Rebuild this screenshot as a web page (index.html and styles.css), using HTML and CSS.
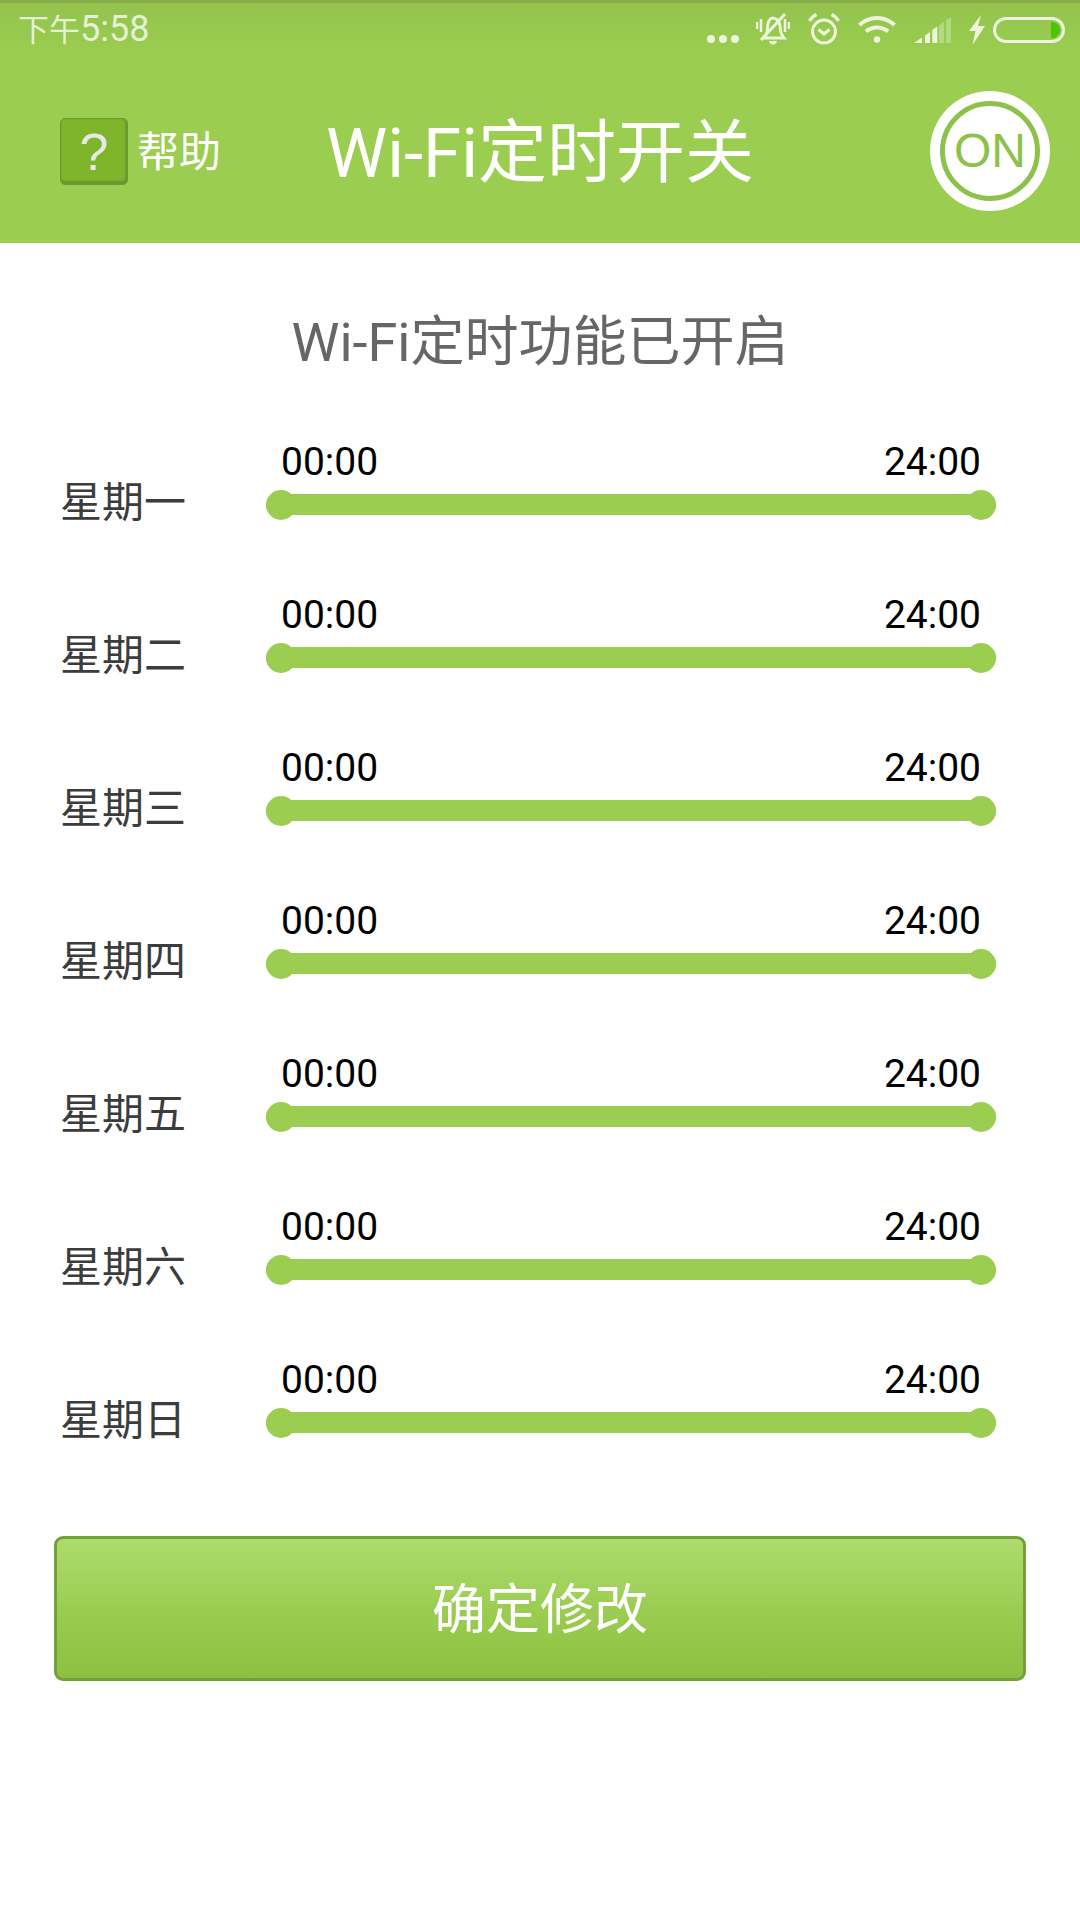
FILE: index.html
```html
<!DOCTYPE html>
<html lang="zh-CN">
<head>
    <meta charset="UTF-8">
    <meta name="viewport" content="width=device-width, initial-scale=1.0">
    <title>Wi-Fi定时开关</title>
    <link rel="stylesheet" href="styles.css">
</head>
<body>

    <header class="header">
        <div class="statusbar">
            <div class="clock"><span class="clock-cn">下午</span>5:58</div>
            <div class="status-icons">
                <svg class="icon-dots" width="32" height="32" viewBox="0 0 32 32"><circle cx="4" cy="26" r="4"/><circle cx="16" cy="26" r="4"/><circle cx="28" cy="26" r="4"/></svg>
                <svg class="icon-bell" width="34" height="32" viewBox="0 0 34 32">
                    <path class="line" d="M9 23c2-2 2.500-5 2.500-9 0-5 2.500-9 5.500-9s6.500 3 7 8c.4 4 .5 7 2.500 10l1.500 2H7.500z"/>
                    <path class="line" d="M5 27 29 1"/>
                    <path d="M13 28h8c-.5 2-2 3.500-4 3.500s-3.500-1.500-4-3.500z"/>
                    <path class="line thin" d="M1 9v7M5 6v13M29 6v13M33 9v7"/>
                </svg>
                <svg class="icon-alarm" width="32" height="32" viewBox="0 0 32 32">
                    <circle class="line" cx="16" cy="18.500" r="11.500"/>
                    <path class="line" d="M10.500 16.500 16 21l5.500-4.500"/>
                    <path class="line" d="M1.500 8C3 5 5 3 8.500 1.500M30.500 8C29 5 27 3 23.500 1.500"/>
                </svg>
                <svg class="icon-wifi" width="38" height="32" viewBox="0 0 38 32">
                    <path class="line wide" d="M1.500 12C11 2.500 27 2.500 36.500 12"/>
                    <path class="line wide" d="M8 18.500c6-5.500 16-5.500 22 0"/>
                    <circle cx="19" cy="26.500" r="3.200"/>
                </svg>
                <svg class="icon-signal" width="37" height="32" viewBox="0 0 37 32">
                    <polygon points="0,30 8,24.500 8,30"/>
                    <polygon points="11,22.500 16,19 16,30 11,30"/>
                    <polygon points="18.300,17 23.300,13.500 23.300,30 18.300,30"/>
                    <polygon class="faint" points="25,12 30,8.500 30,30 25,30"/>
                    <polygon class="faint" points="32,7 37,4.500 37,30 32,30"/>
                </svg>
                <svg class="icon-bolt" width="16" height="32" viewBox="0 0 16 32"><polygon points="12,2 0,18 6.500,18 3.500,32 16,13 9,13"/></svg>
                <div class="battery"><div class="battery-fill"></div></div>
            </div>
        </div>
        <div class="toolbar">
            <div class="help">
                <div class="help-btn">?</div>
                <span class="help-text">帮助</span>
            </div>
            <h1 class="title">Wi-Fi定时开关</h1>
            <div class="switch-wrap">
                <div class="switch"><div class="switch-ring">ON</div></div>
            </div>
        </div>
    </header>

    <main>
        <h2 class="state">Wi-Fi定时功能已开启</h2>

        <div class="days">
            <div class="day">
                <div class="day-name">星期一</div>
                <div class="slider">
                    <div class="times"><span>00:00</span><span>24:00</span></div>
                    <div class="track"><i class="thumb thumb-l"></i><i class="thumb thumb-r"></i></div>
                </div>
            </div>
            <div class="day">
                <div class="day-name">星期二</div>
                <div class="slider">
                    <div class="times"><span>00:00</span><span>24:00</span></div>
                    <div class="track"><i class="thumb thumb-l"></i><i class="thumb thumb-r"></i></div>
                </div>
            </div>
            <div class="day">
                <div class="day-name">星期三</div>
                <div class="slider">
                    <div class="times"><span>00:00</span><span>24:00</span></div>
                    <div class="track"><i class="thumb thumb-l"></i><i class="thumb thumb-r"></i></div>
                </div>
            </div>
            <div class="day">
                <div class="day-name">星期四</div>
                <div class="slider">
                    <div class="times"><span>00:00</span><span>24:00</span></div>
                    <div class="track"><i class="thumb thumb-l"></i><i class="thumb thumb-r"></i></div>
                </div>
            </div>
            <div class="day">
                <div class="day-name">星期五</div>
                <div class="slider">
                    <div class="times"><span>00:00</span><span>24:00</span></div>
                    <div class="track"><i class="thumb thumb-l"></i><i class="thumb thumb-r"></i></div>
                </div>
            </div>
            <div class="day">
                <div class="day-name">星期六</div>
                <div class="slider">
                    <div class="times"><span>00:00</span><span>24:00</span></div>
                    <div class="track"><i class="thumb thumb-l"></i><i class="thumb thumb-r"></i></div>
                </div>
            </div>
            <div class="day">
                <div class="day-name">星期日</div>
                <div class="slider">
                    <div class="times"><span>00:00</span><span>24:00</span></div>
                    <div class="track"><i class="thumb thumb-l"></i><i class="thumb thumb-r"></i></div>
                </div>
            </div>
        </div>

        <button class="confirm" type="button">确定修改</button>
    </main>

</body>
</html>
```

FILE: styles.css
```css
* { box-sizing: border-box; }
body { margin: 0; background: #fff; font-family: Roboto, "Noto Sans CJK SC", sans-serif; }

.header { height: 243px; background: #9bce50; color: #fff; }

.statusbar { height: 60px; display: flex; justify-content: space-between; padding: 13px 15px 0 18px; border-top: 3px solid #86ad45; background: linear-gradient(#93c34e, #9bce50); }
.clock { font-size: 36px; line-height: 32px; height: 32px; margin-top: -3px; color: rgba(255,255,255,.75); }
.clock-cn { font-size: 31px; }
.status-icons { display: flex; align-items: flex-start; gap: 18px; margin-top: -3px; }
.status-icons svg { display: block; fill: #ecf5dc; }
.status-icons .line { fill: none; stroke: #ecf5dc; stroke-width: 3; }
.status-icons .thin { stroke-width: 2.500; }
.status-icons .wide { stroke-width: 4; }
.status-icons .faint { opacity: .35; }
.icon-dots { margin-right: -1px; }
.icon-bolt { margin-right: -10px; }
.battery { width: 72px; height: 26px; margin-top: 4px; border: 3px solid #ecf5dc; border-radius: 13px; overflow: hidden; display: flex; justify-content: flex-end; padding: 2px 2px 2px 0; }
.battery-fill { width: 9px; background: #4cc400; border-radius: 0 9px 9px 0; }

.toolbar { height: 183px; display: grid; grid-template-columns: 1fr auto 1fr; align-items: center; padding: 0 30px; }
.help { display: flex; align-items: center; gap: 9px; margin: 0 0 0 30px; }
.help-btn { width: 68px; height: 67px; background: #7eb52b; border: 1px solid #6d9a33; border-radius: 5px; box-shadow: inset 0 -3px 2px #6a9430, inset -2px 0 2px #6f9c30; color: #e8e8e8; font-family: "Liberation Sans", sans-serif; font-size: 52px; line-height: 66px; text-align: center; }
.help-text { font-size: 42px; line-height: 50px; margin-top: 2px; }
.title { margin: 5px 0 0; font-size: 69px; font-weight: 400; line-height: 90px; }
.switch-wrap { display: flex; justify-content: flex-end; }
.switch { width: 120px; height: 120px; background: #fff; border-radius: 50%; padding: 10px; margin-top: -1px; }
.switch-ring { width: 100px; height: 100px; border: 5px solid #8cc24a; border-radius: 50%; color: #8cc24a; font-family: "Liberation Sans", sans-serif; font-size: 48px; line-height: 89px; text-align: center; }

.state { margin: 0; padding-top: 70px; font-size: 54px; font-weight: 400; line-height: 60px; text-align: center; color: #666; }

.days { margin-top: 65px; padding: 0 84px 0 60px; display: flex; flex-direction: column; gap: 71px; }
.day { display: flex; align-items: flex-end; }
.day-name { width: 206px; font-size: 42px; line-height: 50px; color: #3c3c3c; position: relative; top: 8px; }
.slider { flex: 1; }
.times { display: flex; justify-content: space-between; padding: 1px 15px 0 15px; font-size: 39px; line-height: 46px; color: #000; margin-bottom: 9px; }
.track { position: relative; height: 21px; margin: 0 0 5px; background: #9bce50; border-radius: 10px; }
.thumb { position: absolute; top: -4.500px; width: 30px; height: 30px; border-radius: 50%; background: #9bce50; }
.thumb-l { left: 0; }
.thumb-r { right: 0; }

.confirm { display: block; width: 972px; height: 145px; margin: 98px 0 0 54px; padding: 4px 0 0; border: 3px solid #74a03a; border-radius: 9px; background: linear-gradient(#aedb6e, #9bcd52 50%, #8dbf40); color: #fff; font-family: inherit; font-size: 54px; line-height: 60px; }
```
